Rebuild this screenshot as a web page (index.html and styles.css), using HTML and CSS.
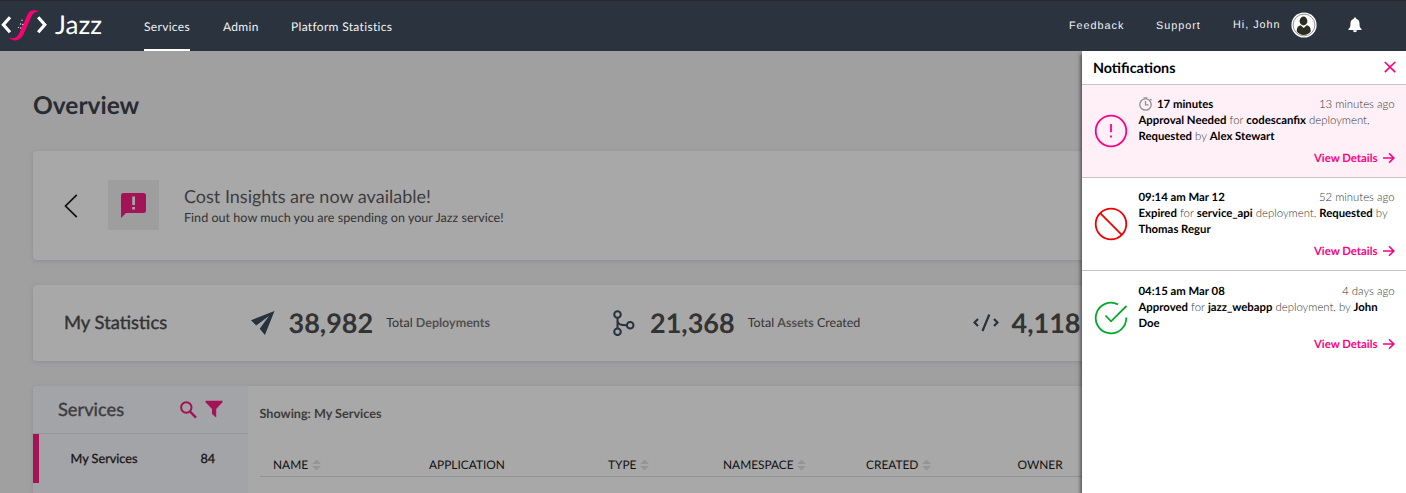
FILE: index.html
```html
<!DOCTYPE html>
<html lang="en">
<head>
<meta charset="utf-8">
<title>Jazz</title>
<link rel="stylesheet" href="styles.css">
</head>
<body>
<header class="topbar">
  <div class="brand">
    <svg class="logo" width="48" height="36" viewBox="0 0 48 36">
      <path d="M10 8.2 3.4 15.7 10 23.2M38.2 8.2l6.6 7.5-6.6 7.5" fill="none" stroke="#fff" stroke-width="3.2"/>
      <path d="M39 2.4C34 .6 30.300 1 28 4.500L19.300 24.300C17.200 28.800 13.600 30.200 8.700 28.600C11.200 31.600 18.300 34 23.200 26L31 8.200C32.800 4.300 35 2.600 39 2.400Z" fill="#ff0073"/>
      <g fill="#dfe3e6"><circle cx="22" cy="11.300" r=".7"/><circle cx="20.500" cy="15" r=".7"/><circle cx="22.700" cy="15.500" r=".7"/><circle cx="18.500" cy="18.300" r=".6"/><circle cx="20.700" cy="19" r=".7"/></g>
    </svg>
    <span class="brand-name">Jazz</span>
  </div>
  <nav class="nav">
    <a class="nav-link active">Services</a>
    <a class="nav-link admin">Admin</a>
    <a class="nav-link">Platform Statistics</a>
  </nav>
  <div class="tools">
    <span class="tool feedback">Feedback</span>
    <span class="tool support">Support</span>
    <span class="tool hello">Hi, John</span>
    <svg class="avatar" width="26" height="26" viewBox="0 0 26 26">
      <circle cx="13" cy="13" r="12.600" fill="#fff"/><circle cx="13" cy="13" r="10.900" fill="#fff" stroke="#777" stroke-width=".8"/>
      <ellipse cx="12.500" cy="9" rx="3.900" ry="4.400" fill="#2b2c22"/>
      <path d="M5.700 19.500c0-4 1.300-5.800 4-6.300L12.700 16l3-2.800c2.800.5 4.100 2.300 4.100 6.300-1.800 2.300-4.200 3.500-7 3.500s-5.300-1.200-7.100-3.500Z" fill="#2b2c22"/>
    </svg>
    <svg class="bell" width="14" height="16" viewBox="0 0 14 16"><path d="M7 .5c.8 0 1.200.5 1.200 1.200 2.200.6 3.300 2.300 3.300 4.600 0 3.300.5 4.700 2 5.700v1H.5v-1c1.500-1 2-2.400 2-5.700 0-2.300 1.100-4 3.300-4.600C5.800 1 6.200.5 7 .5ZM5 13.300h4a2 2 0 0 1-4 0Z" fill="#fff"/></svg>
  </div>
</header>

<main class="page">
  <h1 class="title">Overview</h1>

  <section class="card insight">
    <svg class="prev" width="14" height="24" viewBox="0 0 14 24"><path d="M12.800.8 1.500 12l11.300 11.200" fill="none" stroke="#111" stroke-width="1.700"/></svg>
    <div class="insight-icon">
      <svg width="25" height="25" viewBox="0 0 25 25"><path d="M2.500 0h20A2.500 2.500 0 0 1 25 2.500v15a2.500 2.500 0 0 1-2.500 2.500H5l-5 5V2.500A2.500 2.500 0 0 1 2.500 0Z" fill="#a31457"/><path d="M11.200 3.500h2.800V12h-2.800zM11.200 14h2.800v2.500h-2.800z" fill="#a5a5a5"/></svg>
    </div>
    <div class="insight-text">
      <div class="insight-title">Cost Insights are now available!</div>
      <div class="insight-sub">Find out how much you are spending on your Jazz service!</div>
    </div>
  </section>

  <section class="card stats">
    <h2 class="stats-title">My Statistics</h2>
    <div class="stat">
      <svg class="stat-icon" width="26" height="26" viewBox="0 0 26 26"><path d="M24.500 1 1 10.300l5.200 5.200L19 6 9.700 18.800l5.200 6.200Z" fill="#28323d"/></svg>
      <span class="stat-value">38,982</span>
      <span class="stat-label">Total <b>Deployments</b></span>
    </div>
    <div class="stat">
      <svg class="stat-icon" width="26" height="26" viewBox="0 0 26 26"><g fill="none" stroke="#28323d" stroke-width="2"><circle cx="5.500" cy="4.500" r="3.300"/><circle cx="5.500" cy="21.800" r="3.300"/><circle cx="18.200" cy="15.300" r="3.300"/><path d="M5.500 7.800v10.700M5.500 10.500c.3 4 3 4.800 9.500 4.800"/></g></svg>
      <span class="stat-value">21,368</span>
      <span class="stat-label">Total <b>Assets</b> Created</span>
    </div>
    <div class="stat">
      <svg class="stat-icon" width="26" height="26" viewBox="0 0 26 26"><path d="m5 9-3.500 3.500L5 16M21 9l3.500 3.500L21 16M16.300 4.500 9.500 21" fill="none" stroke="#28323d" stroke-width="2.200"/></svg>
      <span class="stat-value">4,118</span>
    </div>
  </section>

  <section class="card services">
    <aside class="side">
      <div class="side-head">
        <span class="side-title">Services</span>
        <svg class="search" width="17" height="18" viewBox="0 0 17 18"><circle cx="6.300" cy="6.500" r="5.200" fill="none" stroke="#a31457" stroke-width="2"/><path d="m9.800 10.300 6.200 6.400" stroke="#a31457" stroke-width="2.400"/></svg>
        <svg class="filter" width="18" height="18" viewBox="0 0 18 18"><path d="M.5.800h17v1.500L11.200 9v8.500L7 14V9L.5 2.300Z" fill="#a31457"/></svg>
      </div>
      <div class="side-item"><span class="side-name">My Services</span><span>84</span></div>
    </aside>
    <div class="listing">
      <div class="showing">Showing: My Services</div>
      <div class="columns">
        <span class="col name">NAME<i class="sort"></i></span>
        <span class="col app">APPLICATION</span>
        <span class="col type">TYPE<i class="sort"></i></span>
        <span class="col space">NAMESPACE<i class="sort"></i></span>
        <span class="col created">CREATED<i class="sort"></i></span>
        <span class="col owner">OWNER</span>
      </div>
    </div>
  </section>
</main>

<aside class="panel">
  <div class="panel-head">
    <span class="panel-title">Notifications</span>
    <svg class="close" width="12" height="12" viewBox="0 0 12 12"><path d="m.8 1 10.400 10.200M11.200 1 .8 11.200" stroke="#ff0080" stroke-width="1.700"/></svg>
  </div>

  <article class="note unread">
    <svg class="note-icon" width="34" height="34" viewBox="0 0 34 34"><circle cx="17" cy="17" r="15.300" fill="none" stroke="#ff0084" stroke-width="1.800"/><path d="M17 10v8.200M17 21.600v2" stroke="#ff0084" stroke-width="1.800"/></svg>
    <div class="note-body">
      <div class="note-top"><b><svg class="timer" width="15" height="14" viewBox="0 0 15 14"><g fill="none" stroke="#909090" stroke-width="1.300"><circle cx="6.500" cy="7.500" r="5.700"/><path d="M6.500 4v3.800h3M4.500.8h4M11.200 2l1.300 1.300"/></g></svg>17 minutes</b><span>13 minutes ago</span></div>
      <p><b>Approval Needed</b> for <b>codescanfix</b> deployment,<br><b>Requested</b> by <b>Alex Stewart</b></p>
      <a class="details">View Details<svg width="12" height="12" viewBox="0 0 12 12"><path d="M0 6h10.500M6 1.200 10.800 6 6 10.800" fill="none" stroke="#ff0080" stroke-width="1.600"/></svg></a>
    </div>
  </article>

  <article class="note">
    <svg class="note-icon" width="34" height="34" viewBox="0 0 34 34"><g fill="none" stroke="#f00000" stroke-width="1.800"><circle cx="17" cy="17" r="15.300"/><path d="m6.200 6.200 21.600 21.600"/></g></svg>
    <div class="note-body">
      <div class="note-top"><b>09:14 am Mar 12</b><span>52 minutes ago</span></div>
      <p><b>Expired</b> for <b>service_api</b> deployment, <b>Requested</b> by<br><b>Thomas Regur</b></p>
      <a class="details">View Details<svg width="12" height="12" viewBox="0 0 12 12"><path d="M0 6h10.500M6 1.200 10.800 6 6 10.800" fill="none" stroke="#ff0080" stroke-width="1.600"/></svg></a>
    </div>
  </article>

  <article class="note last">
    <svg class="note-icon" width="34" height="34" viewBox="0 0 34 34"><g fill="none" stroke="#00aa2b" stroke-width="1.800"><path d="M24 3.400A15.300 15.300 0 1 0 32.300 16.500"/><path d="m11.500 14.500 5.500 5.800L32.500 5"/></g></svg>
    <div class="note-body">
      <div class="note-top"><b>04:15 am Mar 08</b><span>4 days ago</span></div>
      <p><b>Approved</b> for <b>jazz_webapp</b> deployment, by <b>John<br>Doe</b></p>
      <a class="details">View Details<svg width="12" height="12" viewBox="0 0 12 12"><path d="M0 6h10.500M6 1.200 10.800 6 6 10.800" fill="none" stroke="#ff0080" stroke-width="1.600"/></svg></a>
    </div>
  </article>
</aside>
</body>
</html>
```
FILE: styles.css
```css
* { box-sizing: border-box; }
body {
  margin: 0;
  width: 1406px;
  height: 493px;
  overflow: hidden;
  position: relative;
  background: #a0a0a0;
  font-family: Lato, sans-serif;
  text-rendering: geometricPrecision;
  color: #333;
}
h1, h2, p { margin: 0; }
svg { display: block; flex: none; }
span, a, .insight-title, .insight-sub, h1, h2 { white-space: nowrap; }

/* Top bar */
.topbar {
  display: flex;
  height: 51px;
  background: #2a333e;
  border-top: 1px solid #29272b;
  color: #fff;
}
.brand { display: flex; width: 144px; padding-top: 8px; }
.brand-name { margin-left: 7px; font-size: 26px; line-height: 31px; }
.nav { display: flex; width: 900px; }
.nav-link {
  height: 50px;
  line-height: 51px;
  font-size: 12px;
  letter-spacing: .32px;
  margin-right: 33px;
  color: #f1f2f3;
}
.nav-link.active { width: 46px; border-bottom: 2px solid #fff; }
.nav-link.admin { width: 36px; margin-right: 32px; }
.tools {
  display: flex;
  padding-left: 25px;
  font: 10.800px/50px "Liberation Sans", sans-serif;
  letter-spacing: 1px;
  color: #f1f2f3;
}
.feedback { width: 87px; }
.support { width: 77px; }
.hello { width: 57.500px; line-height: 49px; }
.avatar { margin-top: 11px; }
.bell { margin: 16px 0 0 31.500px; }

/* Page */
.page { height: 442px; padding: 0 33px; overflow: hidden; }
.title {
  height: 100px;
  padding-top: 39px;
  font-size: 24.500px;
  line-height: 31px;
  font-weight: 700;
  color: #272c33;
}
.card {
  display: flex;
  background: #a8a8a8;
  border-radius: 4px;
  box-shadow: 0 1px 4px rgba(110, 110, 130, .35);
}
.insight { height: 109px; padding: 29px 30px; }
.prev { margin: 14px 30px 0 1px; }
.insight-icon {
  display: flex;
  align-items: center;
  justify-content: center;
  width: 51px;
  height: 50px;
  background: #9e9e9e;
}
.insight-text { margin-left: 25px; padding-top: 5px; }
.insight-title { font-size: 18px; line-height: 23px; color: #3d3d3d; }
.insight-sub { font-size: 12.600px; line-height: 19px; color: #333; }

.stats { height: 76px; margin-top: 25px; align-items: center; padding-left: 31px; overflow: hidden; }
.stats-title {
  width: 186px;
  padding-bottom: 2px;
  font-size: 18.400px;
  font-weight: 400;
  color: #333;
  -webkit-text-stroke: .4px #333;
}
.stat { display: flex; align-items: center; flex: none; width: 361.500px; padding-bottom: 1px; }
.stat-value { margin-left: 12.500px; font-size: 27px; font-weight: 700; }
.stat-label { margin-left: 13px; font-size: 12.500px; letter-spacing: 0; }
.stat-label b { color: #505050; }

.services { height: 107px; margin-top: 25px; border-radius: 4px 4px 0 0; overflow: hidden; }
.side { width: 215px; background: #a3a4a8; }
.side-head { display: flex; height: 48px; padding-left: 25px; border-bottom: 1px solid #95969a; }
.side-title {
  width: 122px;
  font-size: 18.300px;
  line-height: 46px;
  color: #3d3d3f;
  -webkit-text-stroke: .4px #3d3d3f;
}
.search { margin-top: 15px; }
.filter { margin: 14px 0 0 7.500px; }
.side-item {
  display: flex;
  height: 49px;
  padding-left: 31.500px;
  border-left: 6px solid #a31457;
  font-size: 12.700px;
  line-height: 48px;
  color: #161616;
  -webkit-text-stroke: .3px #161616;
}
.side-name { width: 130px; }
.listing { flex: 1; padding: 18px 0 0 11.500px; }
.showing { height: 49px; font-size: 12.600px; line-height: 20px; font-weight: 700; color: #3c3c3c; }
.columns {
  display: flex;
  height: 24px;
  padding-left: 13.500px;
  border-bottom: 1px solid #929292;
  font-size: 11.900px;
  line-height: 24px;
  color: #111;
}
.col { display: flex; align-items: center; flex: none; }
.name { width: 156px; }
.app { width: 179px; }
.type { width: 115px; }
.space { width: 143px; }
.created { width: 151.500px; }
.sort { width: 9px; height: 10px; margin-left: 3.500px; display: flex; flex-direction: column; justify-content: space-between; }
.sort::before, .sort::after { content: ""; border: 4px solid transparent; border-top: 0; border-bottom-color: #959595; }
.sort::after { border-bottom: 0; border-top: 4px solid #959595; }

/* Notifications drawer, over the page */
.panel {
  position: absolute;
  top: 51px;
  right: 0;
  width: 324px;
  height: 442px;
  background: #fff;
  box-shadow: -1px 3px 4px rgba(0, 0, 0, .65);
  clip-path: inset(0 0 0 -10px);
  color: #000;
}
.panel-head {
  display: flex;
  justify-content: space-between;
  height: 34px;
  padding: 0 10px 0 11px;
  border-bottom: 1px solid #c8c4c6;
}
.panel-title { font-size: 14.300px; line-height: 35px; font-weight: 700; }
.close { margin-top: 10px; }
.note { display: flex; height: 93px; padding: 12px 11.500px 0 12px; border-bottom: 1px solid #c8c4c6; }
.note.unread { background: #fff0f7; }
.note.last { padding-top: 13px; border: 0; }
.note-icon { margin-top: 17px; }
.note-body { flex: 1; margin-left: 10.500px; font-size: 11.350px; line-height: 16px; font-weight: 300; color: #333; }
.note-body b { color: #000; font-weight: 700; }
.note-body p { height: 32px; white-space: nowrap; }
.note-top { display: flex; justify-content: space-between; }
.note-top b { display: flex; }
.timer { margin: 0 3.500px 0 0; }
.details {
  display: flex;
  align-items: center;
  justify-content: flex-end;
  margin-top: 6px;
  color: #ff0080;
  font-weight: 700;
}
.details svg { margin: -2px 0 0 5px; }
.last .details { margin-top: 5px; }
```
